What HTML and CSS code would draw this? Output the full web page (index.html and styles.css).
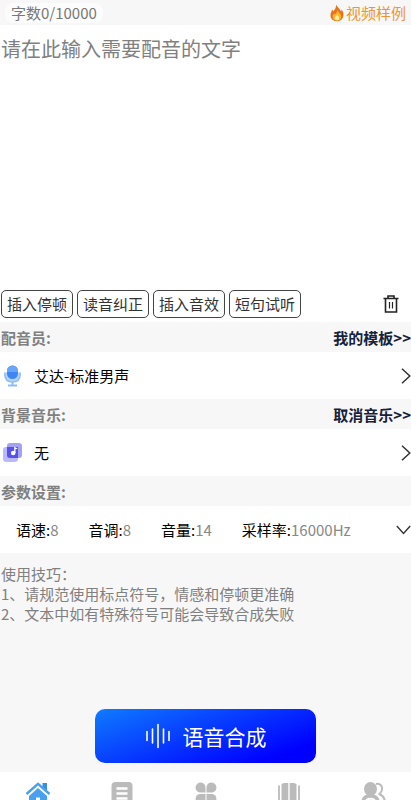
FILE: index.html
```html
<!DOCTYPE html>
<html lang="zh-CN">
<head>
    <meta charset="UTF-8">
    <meta name="viewport" content="width=device-width, initial-scale=1.0">
    <title>语音合成</title>
    <link rel="stylesheet" href="styles.css">
</head>
<body>
    <div class="topbar">
        <label class="count" for="content">字数0/10000</label>
        <a class="sample" href="#">
            <svg width="14" height="18" viewBox="0 0 14 18">
                <path d="M6 0.5C7 3 10.3 5 11 7.5C11.5 7 11.6 6 11.4 5.2C13 7 13.8 9 13.4 11.6C13 15 10.6 17.3 7 17.3C3.2 17.3 0.6 15 0.5 11.6C0.4 9 1.6 7.4 2.3 5.6C2.8 6.2 3 6.9 3 7.6C5 5.8 6.4 3.3 6 0.5Z" fill="#e8731c"/>
                <path d="M7.3 5.5C7.6 8 10.9 9.3 11.2 12.2C11.4 15 9.6 16.6 7 16.6C4.4 16.6 2.5 15 2.7 12.3C2.8 11 3.3 10.2 3.7 9.4C4 10 4.3 10.4 4.8 10.6C6.5 9.4 7.3 7.6 7.3 5.5Z" fill="#fbb62c"/>
                <path d="M7.2 10.2C7.4 12 9.2 12.4 9.1 14.2C9 15.6 8.2 16.3 7 16.3C5.6 16.3 4.7 15.4 4.8 14.1C4.9 12.6 6.7 12 7.2 10.2Z" fill="#fff0a0"/>
            </svg>
            视频样例
        </a>
    </div>

    <textarea class="content" id="content" placeholder="请在此输入需要配音的文字"></textarea>

    <div class="tools">
        <button class="tool">插入停顿</button>
        <button class="tool">读音纠正</button>
        <button class="tool">插入音效</button>
        <button class="tool">短句试听</button>
        <button class="clear" aria-label="清空">
            <svg width="16" height="18" viewBox="0 0 16 18" fill="none" stroke="#222" stroke-width="1.6">
                <path d="M0.5 3.5H15.5M5 3V1H11V3M2.5 3.5V17H13.5V3.5"/>
                <path d="M6.5 7V13.500M9.5 7V13.500" stroke-width="1.2"/>
            </svg>
        </button>
    </div>

    <!-- Voice -->
    <div class="section">
        <span>配音员:</span>
        <a class="more" href="#">我的模板&gt;&gt;</a>
    </div>
    <a class="item" href="#">
        <svg width="24" height="24" viewBox="0 0 24 24">
            <path d="M4.8 8.500V10.5C4.8 15.5 8 18 12.5 18S20.200 15.5 20.200 10.5V8.500" fill="#b4d4fc" stroke="#8dbcf8" stroke-width="1.4"/>
            <rect x="7" y="1.5" width="11" height="13.500" rx="5.5" fill="#3f86f2"/>
            <path d="M7 8V7A5.5 5.5 0 0 1 18 7V8Z" fill="#68a7f7"/>
            <path d="M12.5 18V21.5M8 21.5H17" stroke="#8dbcf8" stroke-width="1.8"/>
        </svg>
        <span class="item-name">艾达-标准男声</span>
        <svg width="10" height="16" viewBox="0 0 10 16" fill="none" stroke="#333" stroke-width="1.5">
            <path d="M1 0.8L8.8 8L1 15.2"/>
        </svg>
    </a>

    <!-- Background music -->
    <div class="section">
        <span>背景音乐:</span>
        <a class="more" href="#">取消音乐&gt;&gt;</a>
    </div>
    <a class="item" href="#">
        <svg width="24" height="24" viewBox="0 0 24 24">
            <rect x="7" y="2" width="15" height="15" rx="3" fill="#a3a0f6"/>
            <rect x="3" y="6" width="15" height="15" rx="3" fill="#aaa8fa" fill-opacity="0.8"/>
            <path d="M7 6H18V17H10A3 3 0 0 1 7 14Z" fill="#5850ea"/>
            <path d="M14.2 12V5.200C15 6.800 17.500 6.500 17.800 8.500C17 8 16 8 15.500 8.200V12Z" fill="#fff"/>
            <circle cx="13.2" cy="12" r="2.3" fill="#fff"/>
        </svg>
        <span class="item-name">无</span>
        <svg width="10" height="16" viewBox="0 0 10 16" fill="none" stroke="#333" stroke-width="1.5">
            <path d="M1 0.8L8.8 8L1 15.2"/>
        </svg>
    </a>

    <!-- Params -->
    <div class="section">
        <span>参数设置:</span>
    </div>
    <a class="item params" href="#">
        <span>语速:<span class="value">8</span></span>
        <span>音调:<span class="value">8</span></span>
        <span>音量:<span class="value">14</span></span>
        <span>采样率:<span class="value">16000Hz</span></span>
        <svg class="down" width="15" height="10" viewBox="0 0 15 10" fill="none" stroke="#333" stroke-width="1.4">
            <path d="M0.8 1L7.5 8.5L14.2 1"/>
        </svg>
    </a>

    <div class="tips">
        <div>使用技巧：</div>
        <div>1、请规范使用标点符号，情感和停顿更准确</div>
        <div>2、文本中如有特殊符号可能会导致合成失败</div>
    </div>

    <button class="submit">
        <svg width="26" height="26" viewBox="0 0 26 26" stroke="#fff" stroke-width="1.6" stroke-linecap="round">
            <path d="M2 8.5V17.5M7.5 6V20M13 1.5V24.5M18.5 6V20M24 8.5V17.5"/>
        </svg>
        语音合成
    </button>

    <nav class="tabbar">
        <a href="#" aria-label="首页">
            <svg width="26" height="26" viewBox="0 0 26 26">
                <path d="M17.500 1H22V10L17.500 6Z" fill="#3b8de0"/>
                <path d="M4 14L13 6L22 14V25H4Z" fill="#4a9fee"/>
                <path d="M1.5 12L13 1.800L24.5 12" fill="none" stroke="#4a9fee" stroke-width="2.4"/>
                <path d="M2.500 14L13 4.600L23.5 14" fill="none" stroke="#fff" stroke-width="1"/>
                <rect x="11" y="15.500" width="4" height="9" fill="#fff"/>
            </svg>
        </a>
        <a href="#" aria-label="文案">
            <svg width="26" height="26" viewBox="0 0 26 26">
                <rect x="2.5" y="0" width="21" height="25" rx="4" fill="#bbb"/>
                <path d="M7.5 6.5H18.5M7.5 11.5H18.5M7.5 16.5H18.5" stroke="#fff" stroke-width="2.4"/>
            </svg>
        </a>
        <a href="#" aria-label="工具">
            <svg width="26" height="26" viewBox="0 0 26 26" fill="#bbb">
                <path d="M12.500 10.500H7A5 5 0 1 1 12.500 6Z"/>
                <path d="M13.500 10.500H19A5 5 0 1 0 13.500 6Z"/>
                <path d="M12.500 12H7A5 5 0 1 0 12.500 18Z"/>
                <path d="M13.500 12H19A5 5 0 1 1 13.500 18Z"/>
            </svg>
        </a>
        <a href="#" aria-label="教程">
            <svg width="26" height="26" viewBox="0 0 26 26">
                <path d="M3 3.500V22H23V3.500" fill="none" stroke="#bbb" stroke-width="1.8"/>
                <path d="M5.5 2L8 1H12.300V20L5.5 19Z" fill="#bbb"/>
                <path d="M20.500 2L18 1H13.700V20L20.500 19Z" fill="#bbb"/>
            </svg>
        </a>
        <a href="#" aria-label="我的">
            <svg width="26" height="26" viewBox="0 0 26 26">
                <path d="M16 2C20 1 22.500 4 22 7.500C21.800 9.500 20.500 11 19.500 12C23 13.500 25 16 25 21" fill="none" stroke="#bbb" stroke-width="2"/>
                <ellipse cx="10.500" cy="7" rx="6.500" ry="7" fill="#bbb"/>
                <path d="M1 22C1 16 4 12 10.500 12S20 16 20 22Z" fill="#bbb"/>
                <path d="M6 18Q10.500 15.500 15 18" fill="none" stroke="#fff" stroke-width="2"/>
            </svg>
        </a>
    </nav>
</body>
</html>
```
FILE: styles.css
```css
* {
    box-sizing: border-box;
}

body {
    margin: 0;
    min-height: 100vh;
    display: flex;
    flex-direction: column;
    background-color: #f7f7f7;
    font-family: 'Noto Sans CJK SC', sans-serif;
    font-size: 15px;
    line-height: 20px;
    color: #111;
}

a {
    color: inherit;
    text-decoration: none;
}

button {
    font-family: inherit;
    margin: 0;
    cursor: pointer;
}

svg {
    display: block;
    flex: none;
}

.topbar {
    display: flex;
    justify-content: space-between;
    align-items: center;
    height: 25px;
    padding: 0 5px;
}

.count {
    padding: 0 6px;
    border-radius: 8px;
    background-color: #fcfcfc;
    color: #777;
}

.sample {
    display: flex;
    align-items: center;
    gap: 2px;
    color: #ec9632;
}

.content {
    display: block;
    width: 100%;
    height: 260px;
    padding: 9px 1px;
    border: none;
    outline: none;
    resize: none;
    background-color: #fff;
    font-family: inherit;
    font-size: 20px;
    line-height: 30px;
    color: #333;
}

.content::placeholder {
    color: #808080;
}

.tools {
    display: flex;
    align-items: center;
    gap: 4px;
    padding: 5px 12px 4px 1px;
    background-color: #fff;
}

.tool {
    height: 28px;
    padding: 0 5px;
    border: 1px solid #444;
    border-radius: 5px;
    background-color: #fff;
    font-size: 15px;
    line-height: 20px;
    color: #333;
}

.clear {
    margin-left: auto;
    padding: 0;
    border: none;
    background: none;
}

.section {
    display: flex;
    justify-content: space-between;
    align-items: center;
    height: 30px;
    padding: 2px 0 0 1px;
    font-weight: 700;
    color: #808080;
}

.more {
    color: #16213a;
}

.item {
    display: flex;
    align-items: center;
    gap: 10px;
    height: 47px;
    background-color: #fff;
}

.item-name {
    flex: 1;
    color: #000;
}

.params {
    gap: 30px;
    padding-left: 16px;
    color: #000;
}

.value {
    color: #888;
}

.down {
    margin-left: auto;
}

.tips {
    padding: 11px 1px;
    color: #808080;
}

.submit {
    display: flex;
    justify-content: center;
    align-items: center;
    gap: 12px;
    width: 54%;
    height: 54px;
    margin: auto auto 9px;
    border: none;
    border-radius: 10px;
    background: linear-gradient(160deg, #0f7bff, #0000ff 85%);
    font-size: 21px;
    color: #fff;
}

/* Only the top of the icons shows above the screen edge */
.tabbar {
    display: flex;
    justify-content: space-between;
    height: 28px;
    padding: 10px 25px 0;
    overflow: hidden;
    background-color: #fff;
}
```
